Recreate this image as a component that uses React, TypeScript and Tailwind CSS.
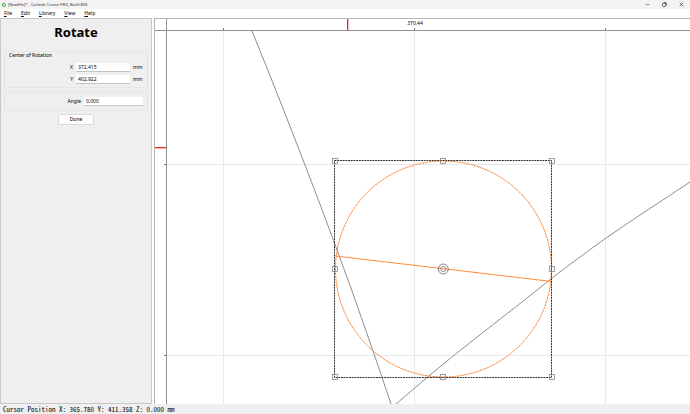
import { useState } from "react";

const menus = ["File", "Edit", "Library", "View", "Help"];

const handles = [
  [180, 142],
  [288, 142],
  [397, 142],
  [180, 250],
  [397, 250],
  [180, 358],
  [288, 358],
  [397, 358],
];

function TitleBar() {
  return (
    <header className="flex h-[9px] shrink-0 items-center bg-[#f3f3f3] pl-[2px] pr-[6px]">
      <svg viewBox="0 0 10 10" className="size-[4px]" aria-hidden="true">
        <path d="M8.4 2.2A4 4 0 1 0 9 5.6H5.6" fill="none" stroke="#12a012" strokeWidth="2.2" />
      </svg>
      <h1 className="ml-[2px] flex-1 text-[4px] leading-[8px] text-[#333]">
        [NewFile]* - Carbide Create PRO, Build 836
      </h1>
      <div className="flex items-center gap-[12px]">
        <button aria-label="Minimize" className="block size-[5px]">
          <svg viewBox="0 0 5 5" className="size-full">
            <path d="M.5 2.5h4" stroke="#666" strokeWidth=".7" />
          </svg>
        </button>
        <button aria-label="Restore" className="block size-[5px]">
          <svg viewBox="0 0 5 5" className="size-full" fill="none" stroke="#333" strokeWidth=".7">
            <rect x=".5" y="1.3" width="3.2" height="3.2" rx=".7" />
            <path d="M1.6 .5h1.8a1.1 1.1 0 0 1 1.1 1.1v1.8" />
          </svg>
        </button>
        <button aria-label="Close" className="block size-[5px]">
          <svg viewBox="0 0 5 5" className="size-full">
            <path d="M.7.7l3.6 3.6M4.3.7L.7 4.3" stroke="#333" strokeWidth=".7" />
          </svg>
        </button>
      </div>
    </header>
  );
}

function MenuBar() {
  return (
    <nav className="flex h-[9px] shrink-0 items-center gap-[9px] bg-white pl-[4px]">
      {menus.map((name) => (
        <button key={name} className="text-[5px] leading-[9px]">
          <span className="underline">{name[0]}</span>
          {name.slice(1)}
        </button>
      ))}
    </nav>
  );
}

const inputClass =
  "h-[9px] border-b border-[#c4c4c4] bg-white px-[2px] text-[5px] leading-[8px] outline-none";

function RotatePanel() {
  const [x, setX] = useState("372.415");
  const [y, setY] = useState("402.922");
  const [angle, setAngle] = useState("0.000");

  return (
    <aside className="mr-[2px] w-[152px] shrink-0 border border-[#c8c8c8] bg-[#efefef] px-[3px] text-[5px] leading-[7px]">
      <h2 className="pt-[4px] text-center text-[13px] font-bold leading-[18px]">Rotate</h2>

      {/* Center of rotation */}
      <section className="mt-[10px] rounded-[1px] border border-[#e6e6e6] pb-[3px] pr-[4px]">
        <h3 className="pl-[4px]">Center of Rotation</h3>
        <div className="mt-[4px] flex flex-col gap-[3px]">
          <div className="flex items-center justify-end">
            <label htmlFor="x">X</label>
            <input
              id="x"
              value={x}
              onChange={(e) => setX(e.target.value)}
              className={`${inputClass} ml-[3px] w-[54px]`}
            />
            <span className="ml-[3px] w-[10px]">mm</span>
          </div>
          <div className="flex items-center justify-end">
            <label htmlFor="y">Y</label>
            <input
              id="y"
              value={y}
              onChange={(e) => setY(e.target.value)}
              className={`${inputClass} ml-[3px] w-[54px]`}
            />
            <span className="ml-[3px] w-[10px]">mm</span>
          </div>
        </div>
      </section>

      {/* Angle */}
      <section className="mt-[4px] flex items-center justify-end rounded-[1px] border border-[#e6e6e6] py-[4px] pr-[4px]">
        <label htmlFor="angle">Angle</label>
        <input
          id="angle"
          value={angle}
          onChange={(e) => setAngle(e.target.value)}
          className={`${inputClass} ml-[3px] w-[59px]`}
        />
      </section>

      <button className="mx-auto mt-[3px] block h-[11px] w-[36px] rounded-[1px] border border-[#dcdcdc] bg-[#fdfdfd]">
        Done
      </button>
    </aside>
  );
}

function Workspace() {
  return (
    <main className="min-w-0 flex-1 overflow-hidden border-l border-t border-[#b4b4b4] bg-white">
      <svg viewBox="0 0 535 385" preserveAspectRatio="xMinYMin slice" className="size-full" fill="none">
        {/* grid */}
        <path
          d="M68.5 12V385M259.5 12V385M450.5 12V385M12 145.5H535M12 336.5H535"
          stroke="#e9e9e9"
        />

        {/* rulers */}
        <path d="M0 11.5H535M11.5 0V385" stroke="#8f8f8f" />
        <path d="M68.5 9V11M259.5 9V11M450.5 9V11M9 145.5H11M9 336.5H11" stroke="#777" />
        <rect x="192" y="0" width="1.3" height="11" fill="#f02020" />
        <rect x="0" y="128" width="11" height="1.3" fill="#f02020" />
        <text x="260" y="6" textAnchor="middle" fontSize="5" fill="#000">
          370.44
        </text>

        {/* unselected vectors */}
        <path
          d="M97 12C115 56 133 102 150 146S181 228 193 261S225 352 236 385"
          stroke="#707070"
          strokeWidth=".8"
        />
        <path
          d="M241 385C253 375 264 365 275 356C317 321 359 290 397 259C414 246 433 232 451 219C480 199 508 181 535 163"
          stroke="#707070"
          strokeWidth=".8"
        />

        {/* selected circle */}
        <circle cx="288.5" cy="250" r="108" stroke="#ff8a3c" strokeDasharray="3 .5" />
        <path d="M180 237L397 262.5" stroke="#ff8a3c" />

        {/* bounding box */}
        <rect x="179.5" y="141.5" width="217" height="217" stroke="#333" strokeDasharray="2 .7" />
        {handles.map(([hx, hy]) => (
          <rect
            key={`${hx}-${hy}`}
            x={hx - 2.5}
            y={hy - 2.5}
            width="5"
            height="5"
            stroke="#888"
            strokeWidth=".8"
          />
        ))}
        <circle cx="288.3" cy="250" r="5" stroke="#666" strokeWidth=".8" />
        <circle cx="288.3" cy="250" r="2.6" stroke="#777" strokeWidth=".8" />
      </svg>
    </main>
  );
}

export default function App() {
  return (
    <div className="flex h-screen flex-col overflow-hidden bg-white font-['Noto_Sans','Open_Sans',sans-serif] text-black">
      <TitleBar />
      <MenuBar />
      <div className="flex min-h-0 flex-1">
        <RotatePanel />
        <Workspace />
      </div>
      <footer className="h-[10px] shrink-0 whitespace-pre bg-[#efefef] pl-[3px] font-['Noto_Sans_Mono_CJK_SC','Liberation_Mono',monospace] text-[7px] leading-[10px]">
        Cursor Position X: 365.780 Y: 411.358 Z: 0.000 mm
      </footer>
    </div>
  );
}
